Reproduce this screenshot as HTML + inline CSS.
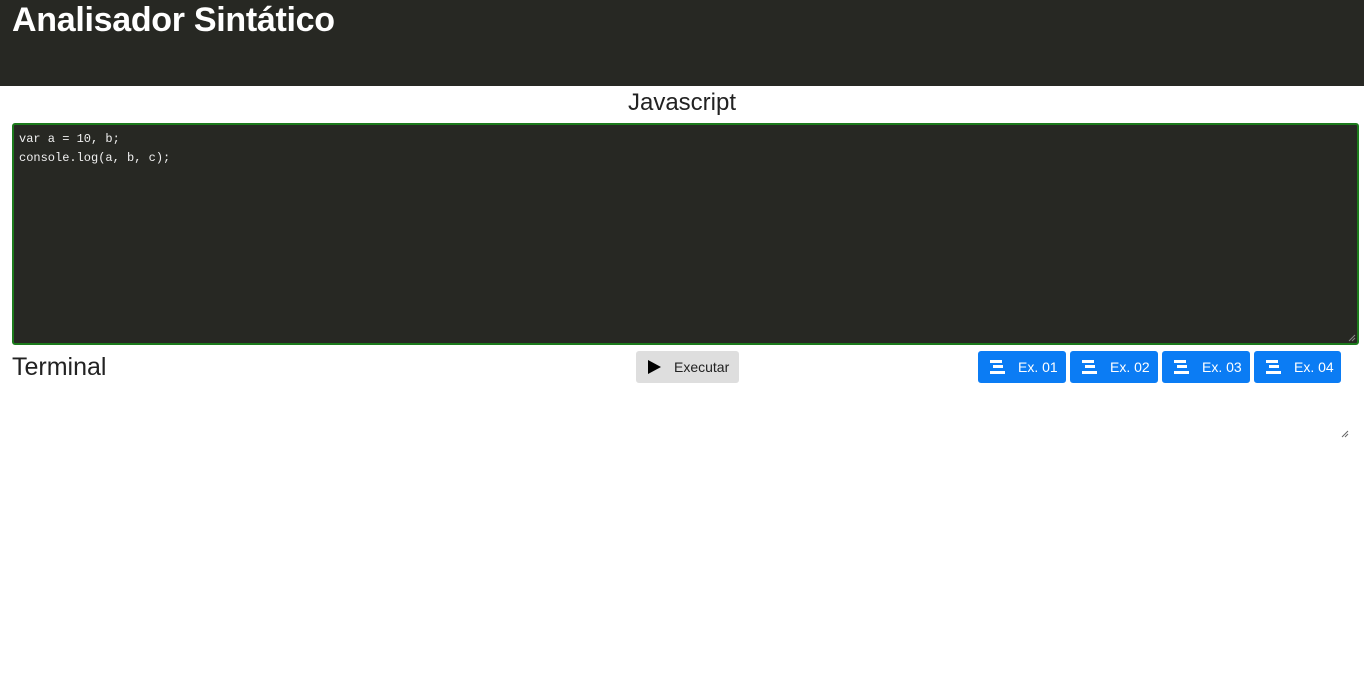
<!DOCTYPE html><html><head><style>
body{margin:0;width:1364px;height:696px;background:#fff;font-family:"Liberation Sans",sans-serif;position:relative;overflow:hidden}
.hd{position:absolute;left:0;top:0;width:1364px;height:86px;background:#272823}
.hd h1{margin:0;position:absolute;left:12px;top:0;color:#fff;font-size:34px;font-weight:bold;line-height:40px;letter-spacing:-0.3px}
.js{position:absolute;left:0;width:1364px;top:88px;text-align:center;font-size:24px;color:#222;line-height:30px}
.ta{position:absolute;left:12px;top:123px;width:1338px;height:213px;background:#272823;border:2px solid #1c7a1c;border-radius:3px;color:#f0f0f0;font-family:"Liberation Mono",monospace;font-size:12px;line-height:19px;padding:5px 0 0 5px;box-sizing:content-box}
.term{position:absolute;left:12px;top:352px;font-size:25px;color:#222;line-height:30px}
.btn{position:absolute;top:351px;height:32px;border-radius:3px;font-size:14px;line-height:32px;box-sizing:border-box}
.ex{background:#0b7cf4;color:#fff;width:88px}
.ex svg{position:absolute;left:12px;top:9px}
.ex span{position:absolute;left:40px}
.run{left:636px;width:103px;background:#dedede;color:#222}
</style></head><body>
<div class="hd"><h1>Analisador Sintático</h1></div>
<div class="js">Javascript</div>
<div class="ta"><div>var a = 10, b;</div><div>console.log(a, b, c);</div>
<svg style="position:absolute;right:1px;bottom:1px" width="8" height="8"><path d="M1 7L7 1M4 7L7 4" stroke="#888" stroke-width="1"/></svg></div>
<div class="term">Terminal</div>
<div class="btn run"><svg style="position:absolute;left:12px;top:9px" width="13" height="14"><path d="M0 0L13 7L0 14Z" fill="#000"/></svg><span style="position:absolute;left:38px">Executar</span></div>
<div class="btn ex" style="left:978px"><svg width="15" height="14"><rect x="0" y="0" width="12" height="3" fill="#fff"/><rect x="3" y="5" width="10" height="3" fill="#fff"/><rect x="0" y="11" width="15" height="3" fill="#fff"/></svg><span>Ex. 01</span></div>
<div class="btn ex" style="left:1070px"><svg width="15" height="14"><rect x="0" y="0" width="12" height="3" fill="#fff"/><rect x="3" y="5" width="10" height="3" fill="#fff"/><rect x="0" y="11" width="15" height="3" fill="#fff"/></svg><span>Ex. 02</span></div>
<div class="btn ex" style="left:1162px"><svg width="15" height="14"><rect x="0" y="0" width="12" height="3" fill="#fff"/><rect x="3" y="5" width="10" height="3" fill="#fff"/><rect x="0" y="11" width="15" height="3" fill="#fff"/></svg><span>Ex. 03</span></div>
<div class="btn ex" style="left:1254px;width:87px"><svg width="15" height="14"><rect x="0" y="0" width="12" height="3" fill="#fff"/><rect x="3" y="5" width="10" height="3" fill="#fff"/><rect x="0" y="11" width="15" height="3" fill="#fff"/></svg><span>Ex. 04</span></div>
<svg style="position:absolute;left:1341px;top:430px" width="8" height="8"><path d="M1 7L7 1M4 7L7 4" stroke="#666" stroke-width="1"/></svg>
</body></html>
